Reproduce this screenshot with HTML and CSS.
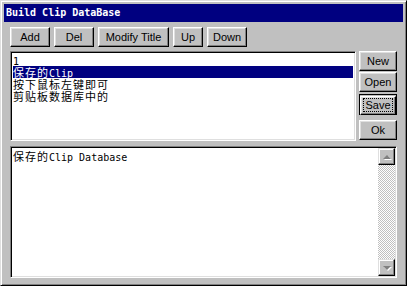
FILE: index.html
```html
<!DOCTYPE html>
<html lang="zh">
<head>
    <meta charset="UTF-8">
    <title>Build Clip DataBase</title>
    <link rel="stylesheet" href="styles.css">
</head>
<body>
    <div class="window">
        <div class="title">Build Clip DataBase</div>
        <div class="toolbar">
            <button class="btn w-add">Add</button>
            <button class="btn w-del">Del</button>
            <button class="btn w-modify">Modify Title</button>
            <button class="btn w-up">Up</button>
            <button class="btn w-down">Down</button>
        </div>
        <div class="middle">
            <div class="listbox">
                <div class="row"><span class="en">1</span></div>
                <div class="row selected">保存的<span class="en">Clip</span></div>
                <div class="row">按下鼠标左键即可</div>
                <div class="row">剪贴板数据库中的</div>
            </div>
            <div class="side">
                <button class="btn side-btn">New</button>
                <button class="btn side-btn">Open</button>
                <div class="default">
                    <button class="btn side-btn"><span class="focus">Save</span></button>
                </div>
                <button class="btn side-btn ok">Ok</button>
            </div>
        </div>
        <div class="edit">
            <div class="edit-text">保存的<span class="en">Clip Database</span></div>
            <div class="scrollbar">
                <div class="arrow"><span class="tri up"></span></div>
                <div class="track"></div>
                <div class="arrow"><span class="tri down"></span></div>
            </div>
        </div>
    </div>
</body>
</html>
```

FILE: styles.css
```css
body {
    margin: 0;
    background-color: #c0c0c0;
}
.window {
    box-sizing: border-box;
    width: 407px;
    height: 286px;
    padding: 3px;
    background-color: #c0c0c0;
    border-top: 1px solid #dfdfdf;
    border-left: 1px solid #dfdfdf;
    border-right: 1px solid #000000;
    border-bottom: 1px solid #000000;
    box-shadow: inset 1px 1px #ffffff, inset -1px -1px #808080;
    display: flex;
    flex-direction: column;
}
.title {
    height: 18px;
    background-color: #000080;
    color: #ffffff;
    font-family: "DejaVu Sans Mono", monospace;
    font-weight: bold;
    font-size: 10px;
    line-height: 18px;
    padding-left: 2px;
}
.btn {
    box-sizing: border-box;
    height: 20px;
    margin: 0;
    padding: 0;
    background-color: #c0c0c0;
    border-top: 1px solid #ffffff;
    border-left: 1px solid #ffffff;
    border-right: 1px solid #000000;
    border-bottom: 1px solid #000000;
    box-shadow: inset -1px -1px #808080, inset 1px 1px #dfdfdf;
    font-family: "Liberation Sans", Arial, sans-serif;
    font-size: 11px;
    color: #000000;
}
.toolbar {
    display: flex;
    gap: 4px;
    margin: 5px 0 0 6px;
}
.w-add { width: 40px; }
.w-del { width: 40px; }
.w-modify { width: 71px; }
.w-up { width: 30px; }
.w-down { width: 40px; }
.middle {
    display: flex;
    margin: 4px 0 0 6px;
    height: 90px;
}
.listbox {
    box-sizing: border-box;
    width: 346px;
    height: 90px;
    background-color: #ffffff;
    border-top: 1px solid #808080;
    border-left: 1px solid #808080;
    border-right: 1px solid #ffffff;
    border-bottom: 1px solid #ffffff;
    box-shadow: inset 1px 1px #000000, inset -1px -1px #dfdfdf;
    padding: 2px 2px;
    font-family: "Noto Sans CJK SC", sans-serif;
    font-size: 11px;
    letter-spacing: 1px;
}
.row {
    height: 12px;
    line-height: 12px;
    white-space: nowrap;
}
.row.selected {
    background-color: #000080;
    color: #ffffff;
}
.en {
    font-family: "DejaVu Sans Mono", monospace;
    font-size: 10px;
    letter-spacing: 0;
}
.side {
    display: flex;
    flex-direction: column;
    margin-left: 3px;
    width: 38px;
}
.side-btn {
    width: 38px;
    margin-bottom: 1px;
}
.default {
    box-sizing: border-box;
    width: 38px;
    height: 21px;
    margin-top: 1px;
    border: 1px solid #000000;
}
.default .side-btn {
    width: 36px;
    height: 19px;
    margin: 0;
}
.focus {
    outline: 1px dotted #000000;
    padding: 0 1px;
}
.ok {
    margin-top: 5px;
}
.edit {
    box-sizing: border-box;
    display: flex;
    margin: 5px 0 0 6px;
    width: 387px;
    height: 132px;
    background-color: #ffffff;
    border-top: 1px solid #808080;
    border-left: 1px solid #808080;
    border-right: 1px solid #ffffff;
    border-bottom: 1px solid #ffffff;
    box-shadow: inset 1px 1px #000000, inset -1px -1px #dfdfdf;
    padding: 1px;
}
.edit-text {
    flex: 1;
    padding: 2px 1px;
    font-family: "Noto Sans CJK SC", sans-serif;
    font-size: 11px;
    letter-spacing: 1px;
    line-height: 12px;
}
.scrollbar {
    width: 17px;
    display: flex;
    flex-direction: column;
}
.arrow {
    box-sizing: border-box;
    height: 17px;
    background-color: #c0c0c0;
    border-top: 1px solid #dfdfdf;
    border-left: 1px solid #dfdfdf;
    border-right: 1px solid #000000;
    border-bottom: 1px solid #000000;
    box-shadow: inset -1px -1px #808080, inset 1px 1px #ffffff;
    display: flex;
    align-items: center;
    justify-content: center;
}
.track {
    flex: 1;
    background: repeating-conic-gradient(#c0c0c0 0 25%, #ffffff 0 50%) 0 0 / 2px 2px;
}
.tri {
    width: 0;
    height: 0;
    border-left: 4px solid transparent;
    border-right: 4px solid transparent;
}
.tri.up {
    border-bottom: 4px solid #808080;
    filter: drop-shadow(1px 1px 0 #ffffff);
}
.tri.down {
    border-top: 4px solid #808080;
    filter: drop-shadow(1px 1px 0 #ffffff);
}
```
